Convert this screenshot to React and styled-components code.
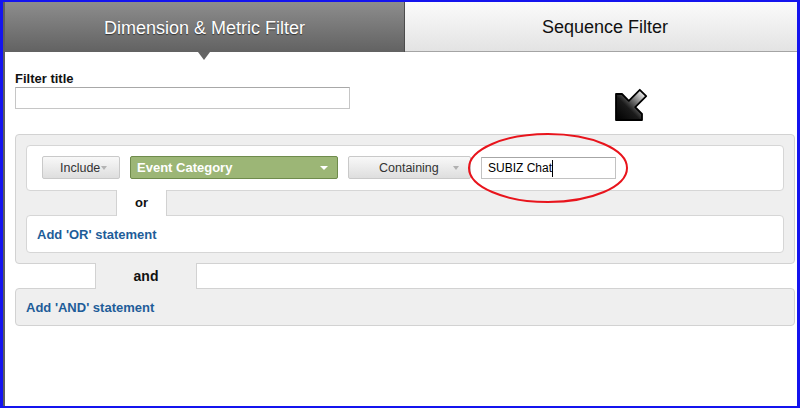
import React from "react";
import styled, { createGlobalStyle } from "styled-components";

const Global = createGlobalStyle`
  html, body { margin: 0; padding: 0; background: #fff; }
  body { font-family: "Liberation Sans", Arial, sans-serif; }
  * { box-sizing: border-box; }
`;

const Frame = styled.div`
  width: 800px;
  height: 408px;
  border-style: solid;
  border-color: #1414ee;
  border-width: 2px 3px 2px 3px;
  overflow: hidden;
`;

const Window = styled.div`
  position: relative;
  height: 100%;
  border-left: 2px solid #5e5e5e;
  background: #fff;
  overflow: hidden;
`;

const TabBar = styled.div`
  display: flex;
  height: 50px;
  width: 800px;
`;

const Tab = styled.div`
  position: relative;
  flex: 0 0 400px;
  height: 50px;
  text-align: center;
  font-size: 18px;
  white-space: nowrap;
  ${(p) =>
    p.$active
      ? `
    background: linear-gradient(#8d8d8d, #626262);
    color: #fff;
    line-height: 52px;
    border-right: 1px solid #4c4c4c;
    text-shadow: 0 1px 1px rgba(0,0,0,0.55);
  `
      : `
    background: linear-gradient(#fbfbfb, #e3e3e3);
    color: #111;
    line-height: 51px;
    border-bottom: 1px solid #a4a4a4;
  `}
`;

const Pointer = styled.span`
  position: absolute;
  left: 193px;
  top: 50px;
  width: 0;
  height: 0;
  border-left: 6.5px solid transparent;
  border-right: 6.5px solid transparent;
  border-top: 8px solid #646464;
`;

const Content = styled.div`
  padding: 19px 0 0 10px;
`;

const Label = styled.div`
  font-size: 13px;
  font-weight: bold;
  line-height: 15px;
  color: #111;
`;

const TitleInput = styled.div`
  margin-top: 1px;
  width: 335px;
  height: 22px;
  border: 1px solid #c6c6c6;
  border-top-color: #a8a8a8;
  background: #fff;
`;

const Panel = styled.div`
  width: 780px;
  margin-top: ${(p) => p.$mt || 0}px;
  border: 1px solid #d2d2d2;
  border-radius: 4px;
  background: #efefef;
  padding: ${(p) => p.$pad || "10px"};
`;

const PanelLink = styled.div`
  height: 36px;
  display: flex;
  align-items: center;
  padding-left: 10px;
`;

const Box = styled.div`
  border: 1px solid #d6d6d6;
  border-radius: 4px;
  background: #fff;
  height: ${(p) => p.$h}px;
  padding: ${(p) => p.$pad};
  display: flex;
  align-items: ${(p) => (p.$center ? "center" : "flex-start")};
  gap: 10px;
`;

const Connector = styled.div`
  position: relative;
  z-index: 1;
  width: ${(p) => p.$w}px;
  height: 26px;
  margin: -1px 0 -1px ${(p) => p.$ml}px;
  background: ${(p) => p.$bg};
  border-left: 1px solid #d2d2d2;
  border-right: 1px solid #d2d2d2;
  display: flex;
  align-items: center;
  justify-content: center;
  font-weight: bold;
  font-size: ${(p) => p.$fs}px;
  color: #111;
  padding-bottom: 1px;
`;

const LinkText = styled.span`
  font-size: 13px;
  font-weight: bold;
  color: #1e5d99;
`;

const Button = styled.div`
  height: 23px;
  width: ${(p) => p.$w}px;
  flex: 0 0 auto;
  display: flex;
  align-items: center;
  gap: ${(p) => p.$gap || 1}px;
  padding-left: ${(p) => p.$pl}px;
  border: 1px solid #c9c9c9;
  border-radius: 2px;
  background: linear-gradient(#f8f8f8, #dedede);
  color: #333;
  font-size: 12.5px;
`;

const GreenSelect = styled.div`
  height: 23px;
  width: 208px;
  flex: 0 0 auto;
  display: flex;
  align-items: center;
  justify-content: space-between;
  padding: 0 9px 0 6px;
  border: 1px solid #6f8b4c;
  border-radius: 2px;
  background: #9cb676;
  color: #fff;
  font-size: 13px;
  font-weight: bold;
`;

const Caret = styled.span`
  width: 0;
  height: 0;
  border-left: ${(p) => p.$s}px solid transparent;
  border-right: ${(p) => p.$s}px solid transparent;
  border-top: ${(p) => p.$h}px solid ${(p) => p.$c};
`;

const ValueInput = styled.div`
  height: 22px;
  width: 135px;
  flex: 0 0 auto;
  margin-top: 1px;
  display: flex;
  align-items: center;
  padding-left: 6px;
  border: 1px solid #c2c2c2;
  border-top-color: #a6a6a6;
  background: #fff;
  font-size: 12px;
  color: #000;
`;

const Cursor = styled.span`
  display: inline-block;
  width: 1px;
  height: 17px;
  background: #000;
  margin-left: 0;
`;

const Overlay = styled.svg`
  position: absolute;
  left: ${(p) => p.$x}px;
  top: ${(p) => p.$y}px;
  pointer-events: none;
  overflow: visible;
`;

export default function App() {
  return (
    <>
      <Global />
      <Frame>
        <Window>
          <TabBar>
            <Tab $active>
              Dimension &amp; Metric Filter
              <Pointer />
            </Tab>
            <Tab>Sequence Filter</Tab>
          </TabBar>
          <Content>
            <Label>Filter title</Label>
            <TitleInput />
            <Panel $mt={25}>
              <Box $h={46} $pad="10px 15px 0 15px">
                <Button $w={78} $pl={17}>
                  Include
                  <Caret $s={3.5} $h={4} $c="#b4b4b4" />
                </Button>
                <GreenSelect>
                  Event Category
                  <Caret $s={4} $h={4} $c="#fff" />
                </GreenSelect>
                <Button $w={123} $pl={30} $gap={14}>
                  Containing
                  <Caret $s={3} $h={4} $c="#b0b0b0" />
                </Button>
                <ValueInput>
                  SUBIZ Chat
                  <Cursor />
                </ValueInput>
              </Box>
              <Connector $w={51} $ml={90} $bg="#fff" $fs={13}>
                or
              </Connector>
              <Box $h={38} $pad="0 10px" $center>
                <LinkText>Add 'OR' statement</LinkText>
              </Box>
            </Panel>
            <Connector $w={102} $ml={80} $bg="#efefef" $fs={14}>
              and
            </Connector>
            <Panel $pad="0">
              <PanelLink>
                <LinkText>Add 'AND' statement</LinkText>
              </PanelLink>
            </Panel>
          </Content>
          <Overlay $x={461} $y={128} width="164" height="76" viewBox="0 0 164 76">
            <ellipse cx="82" cy="38" rx="79" ry="34" fill="none" stroke="#e8141c" strokeWidth="2" />
          </Overlay>
          <Overlay $x={607} $y={82} width="38" height="40" viewBox="0 0 38 40">
            <defs>
              <linearGradient id="arrowFill" x1="0" y1="1" x2="1" y2="0">
                <stop offset="0" stopColor="#000" />
                <stop offset="0.4" stopColor="#1a1a1a" />
                <stop offset="0.6" stopColor="#6a6a6a" />
                <stop offset="0.85" stopColor="#d8d8d8" />
                <stop offset="1" stopColor="#f4f4f4" />
              </linearGradient>
            </defs>
            <polygon
              points="4,36 4,10 10,10 16.8,16.8 27.8,5.8 34.2,12.2 23.2,23.2 30,30 30,36"
              fill="url(#arrowFill)"
              stroke="#000"
              strokeWidth="1.8"
              strokeLinejoin="round"
            />
          </Overlay>
        </Window>
      </Frame>
    </>
  );
}
